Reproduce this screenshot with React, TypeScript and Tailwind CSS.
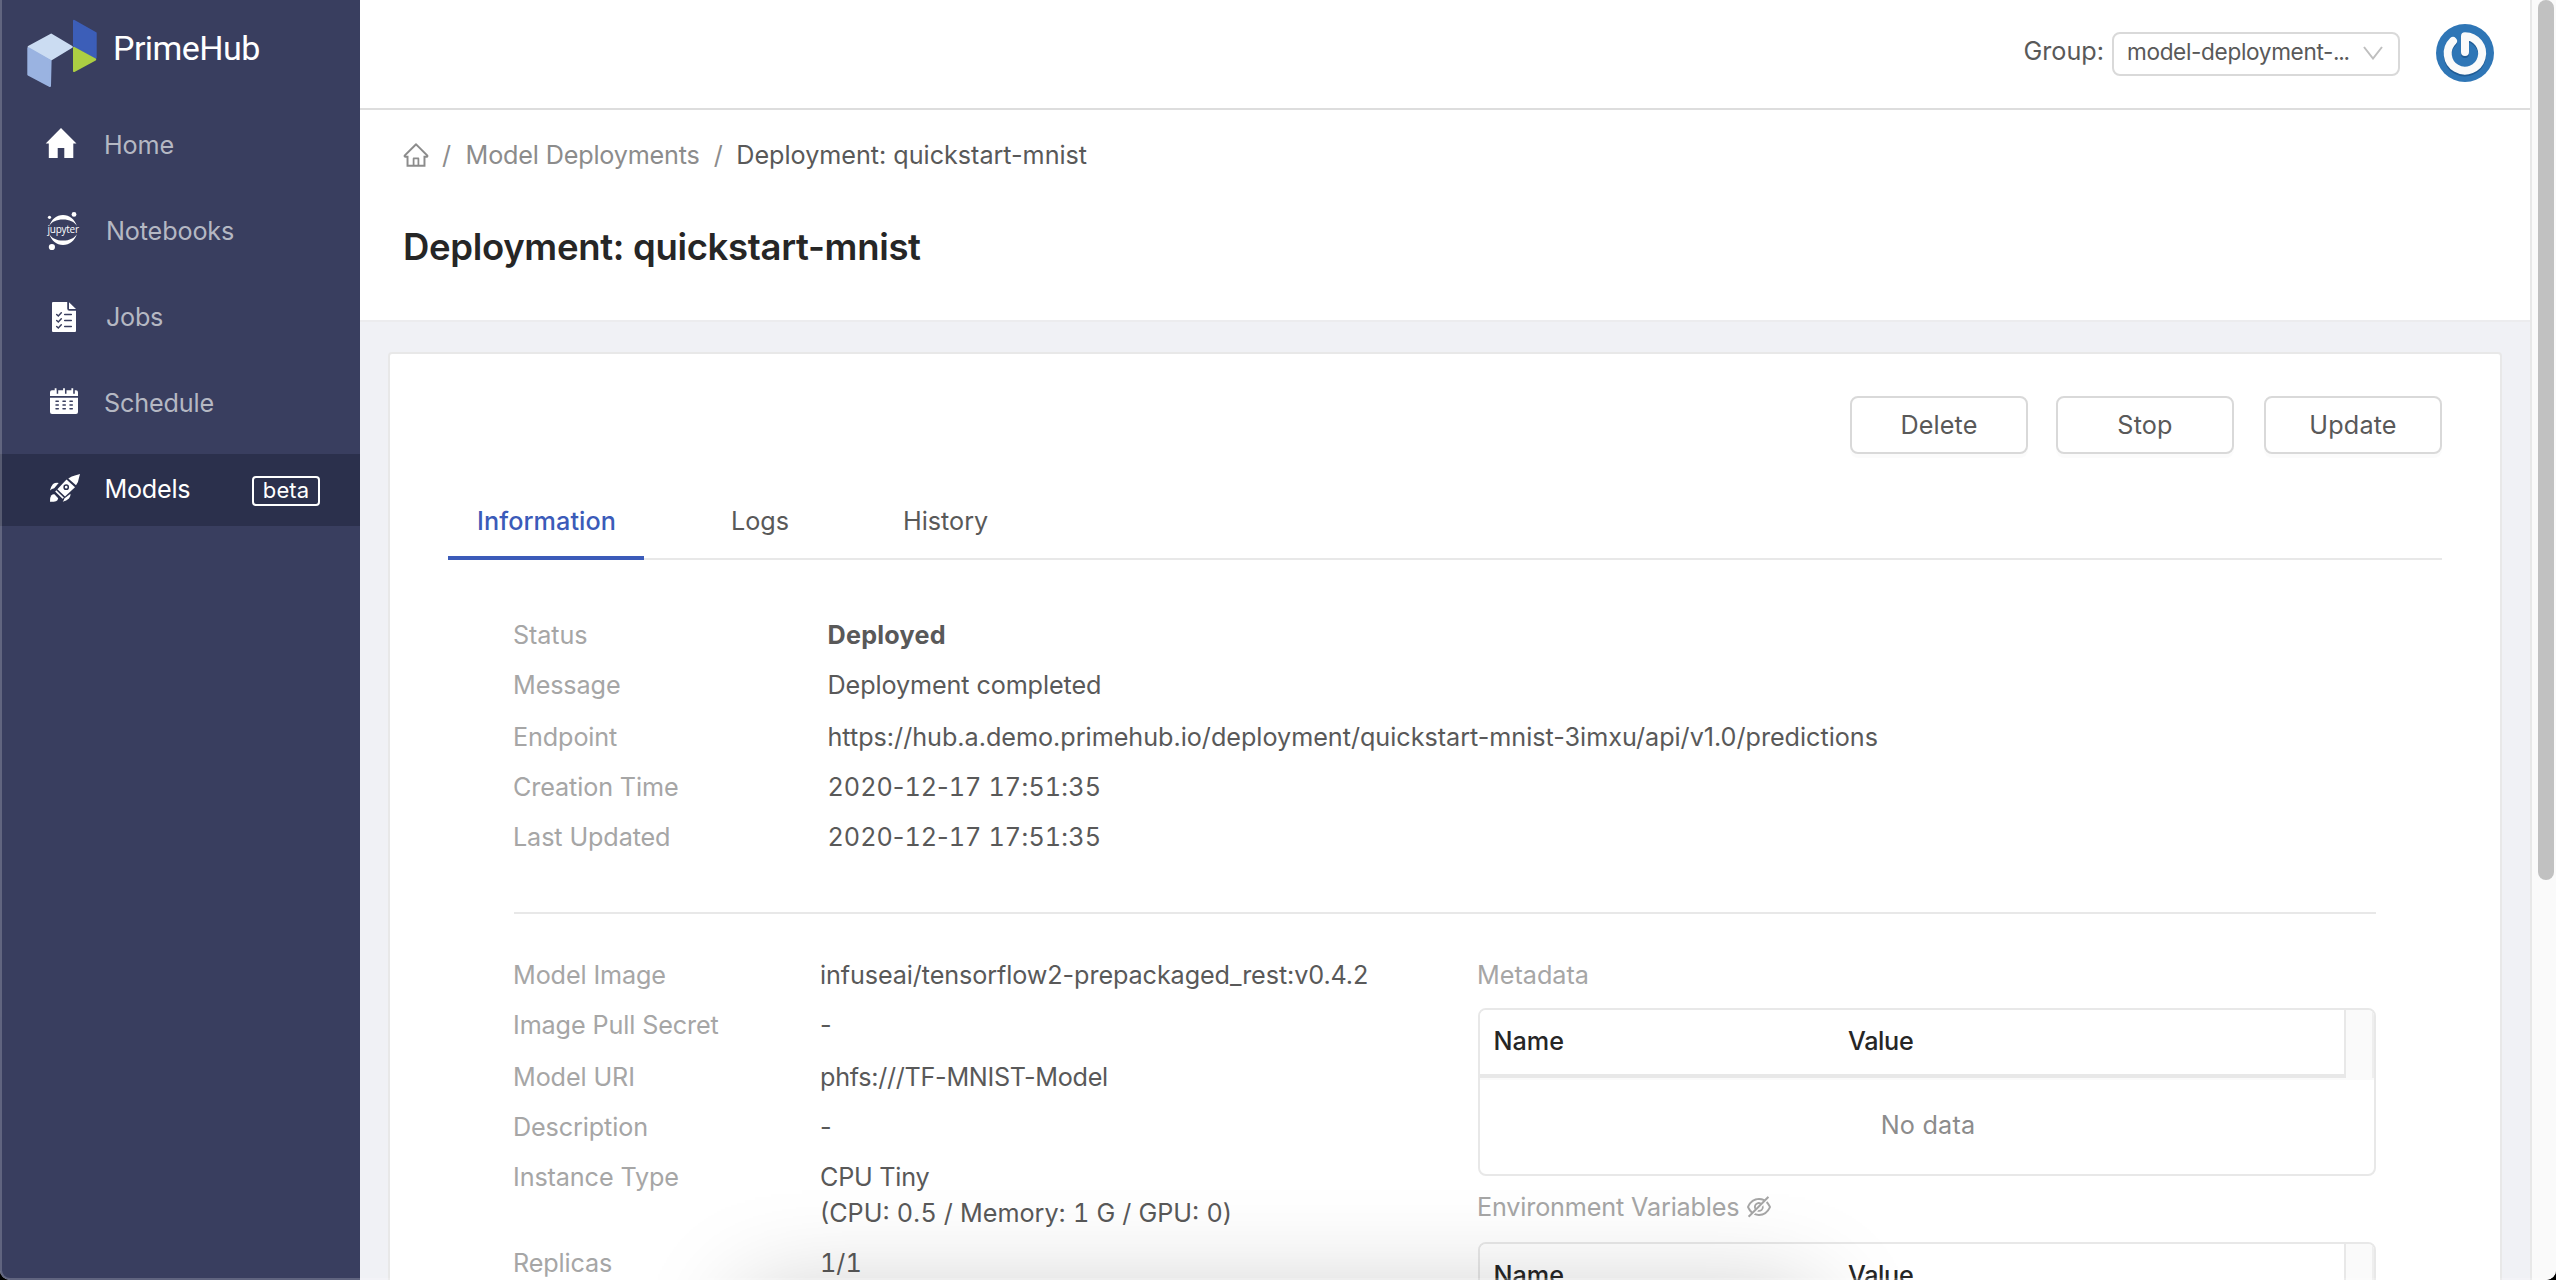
import type { ReactNode } from "react";
import { AiOutlineEyeInvisible, AiOutlineHome } from "react-icons/ai";

const NAVY = "#393e5f";

function Logo() {
  return (
    <svg width="72" height="70" viewBox="26 18 72 70" className="shrink-0" strokeLinejoin="round" strokeWidth="2">
      <path d="M51.2 34.6 71.8 46.9 51.2 59.5 28.6 47z" fill="#cbdcf2" stroke="#cbdcf2" />
      <path d="M28.3 48.2 50.6 60.8 50 86 28.3 74.6z" fill="#9ab3e1" stroke="#9ab3e1" />
      <path d="M74 20.8 95.7 33v24.8L74 45.8z" fill="#3c5eb8" stroke="#3c5eb8" />
      <path d="M74 47.8 95.2 59.5 74 71z" fill="#acce43" stroke="#acce43" />
    </svg>
  );
}

function IconFrame({ top, children }: { top: number; children: ReactNode }) {
  return (
    <svg width="103" height="72" viewBox={`0 ${top} 103 72`} className="shrink-0" fill="#fff">
      {children}
    </svg>
  );
}

function HomeGlyph() {
  return (
    <IconFrame top={110}>
      <path d="M61 128 76.5 143.5H73.3V158H64.3V148H57.7V158H48.8V143.5H45.7z" />
    </IconFrame>
  );
}

function JupyterGlyph() {
  return (
    <IconFrame top={196}>
      <circle cx="74" cy="214.4" r="2.4" />
      <circle cx="49.5" cy="217.3" r="1.6" />
      <circle cx="51.9" cy="247" r="3.1" />
      <path d="M49.3 226C51.5 219.3 56.5 215 63 215s11.7 4.300 13.900 11C74.500 222 69.500 219.600 63 219.600s-11.500 2.400-13.700 6.400z" />
      <path d="M49.300 234C51.500 240.700 56.500 245 63 245s11.700-4.300 13.900-11C74.500 238.200 69.500 240.600 63 240.600s-11.500-2.400-13.700-6.600z" />
      <text x="63.300" y="233" textAnchor="middle" textLength="31.500" fontSize="10" fontFamily="'Open Sans', sans-serif">
        jupyter
      </text>
    </IconFrame>
  );
}

function JobsGlyph() {
  return (
    <IconFrame top={282}>
      <path d="M53 302H67.200V308.500Q67.200 310.700 69.400 310.700H76V331Q76 332 75 332H53Q52 332 52 331V303Q52 302 53 302z" />
      <path d="M69 302.300 76 309H69z" />
      <g stroke={NAVY} strokeWidth="1.500" fill="none" strokeLinecap="round">
        <path d="M64.700 314.500H71.300M64.700 320.500H71.300M64.700 326.500H71.300" />
        <path d="M56.700 314.500 58.300 316 61.300 312.800M56.700 320.500 58.300 322 61.300 318.800M56.700 326.500 58.300 328 61.300 324.800" />
      </g>
    </IconFrame>
  );
}

function ScheduleGlyph() {
  return (
    <IconFrame top={368}>
      <path d="M52 390.300H76Q78 390.300 78 392.300V396H50V392.300Q50 390.300 52 390.300z" />
      <path d="M50 397.700H78V412Q78 414 76 414H52Q50 414 50 412z" />
      <g stroke={NAVY} strokeWidth="1.800">
        <path d="M57.300 389V393.800M65.600 389V393.800M73.900 389V393.800" />
      </g>
      <g stroke="#fff" strokeWidth="1.800">
        <path d="M55.600 388.300V394M64 388.300V394M72.300 388.300V394" />
      </g>
      <g stroke={NAVY} strokeWidth="1.500" strokeLinecap="round">
        <path d="M56 401.300H58.300M63 401.300H65.300M70 401.300H72.300M56 405H58.300M63 405H65.300M70 405H72.300M56 408.700H58.300M63 408.700H65.300M70 408.700H72.300" />
      </g>
    </IconFrame>
  );
}

function RocketGlyph() {
  return (
    <IconFrame top={454}>
      <g transform="translate(50 474)">
        <path d="M30 0 28.800 4.500Q28.500 8.300 26 11.200L18.300 4.600Q21.500 1.900 25.800 1.200z" />
        <path d="M16.500 5.600 25 13.300 15 22.600 7.400 15.200z" />
        <path d="M6.300 16.200 13.900 23.700 12.500 24.800 5.200 17.400z" />
        <circle cx="16.200" cy="13.200" r="2.100" fill="none" stroke="#2b304c" strokeWidth="1.500" />
        <path d="M0 16.500Q.8 12.500 3 10Q5.300 8.400 8.700 8.900L4.200 14.200Q1.800 14.800 0 16.500z" />
        <path d="M12.700 27.800Q14.200 26.200 14.300 24.600L20.500 19.800Q20.800 22.500 19 24.500Q16.500 26.800 12.700 27.800z" />
        <path d="M0 27.800Q-.2 23.500 1.200 21.600Q2.600 20 4.400 20.300L8.200 24.300Q7.800 26.600 6 27.200Q3.500 27.900 0 27.800z" />
      </g>
    </IconFrame>
  );
}

function Avatar() {
  return (
    <svg width="58" height="58" viewBox="0 0 58 58" className="mt-[24px] ml-[36px] shrink-0">
      <circle cx="29" cy="29" r="29" fill="#2f76b6" />
      <g fill="none" strokeLinecap="round" strokeLinejoin="round" strokeWidth="8">
        <path d="M29 29V13A17.200 17.200 0 1 1 16.800 18" stroke="#1f5c96" transform="translate(0 1)" />
        <path d="M29 28V12.200A17.200 17.200 0 1 1 17 17" stroke="#fafafa" />
      </g>
    </svg>
  );
}

const NAV = [
  { label: "Home", glyph: <HomeGlyph />, cls: "ml-[1px] tracking-[-0.1px]" },
  { label: "Notebooks", glyph: <JupyterGlyph />, cls: "ml-[3px] tracking-[-0.15px]" },
  { label: "Jobs", glyph: <JobsGlyph />, cls: "ml-[3px] tracking-[-0.3px]" },
  { label: "Schedule", glyph: <ScheduleGlyph />, cls: "ml-[1px] tracking-[-0.15px]" },
];

function Sidebar() {
  return (
    <aside className="flex w-[360px] shrink-0 flex-col bg-[#393e5f]">
      <div className="flex h-[110px] items-start pt-[18px] pl-[26px]">
        <Logo />
        <span className="ml-[15px] font-[Roboto,sans-serif] text-[34px] leading-[60px] tracking-[-0.55px] text-white">PrimeHub</span>
      </div>
      <nav className="flex flex-col gap-[14px]">
        {NAV.map((n) => (
          <a key={n.label} className="flex h-[72px] items-center text-[#b5b8c3]">
            {n.glyph}
            <span className={`pb-[2px] ${n.cls}`}>{n.label}</span>
          </a>
        ))}
        <a className="flex h-[72px] items-center bg-[#2b304c] text-white">
          <RocketGlyph />
          <span className="ml-[1.500px] pb-[2px] tracking-[-0.25px]">Models</span>
          <span className="mt-[2px] mr-[40px] ml-auto flex h-[30px] w-[68px] items-center justify-center rounded-[4px] border-2 border-white pb-[3px] text-[22px] leading-[26px] tracking-[0.1px]">
            beta
          </span>
        </a>
      </nav>
    </aside>
  );
}

function Header() {
  return (
    <header className="flex h-[110px] shrink-0 items-start justify-end border-b-2 border-[#dddddd] bg-white pr-[36px]">
      <span className="mt-[33px] mr-[8px] leading-[36px] text-[#595959]">Group:</span>
      <div className="mt-[32px] flex h-[44px] w-[288px] justify-between rounded-[8px] border-2 border-[#d9d9d9] pr-[15px] pl-[13px] text-[#595959]">
        <span className="text-[22.600px] leading-[35px] tracking-[-0.350px] whitespace-nowrap">
          model-deployment-<span className="tracking-[-1.300px]">...</span>
        </span>
        <svg width="20" height="14" viewBox="0 0 20 14" className="mt-[12px]" fill="none" stroke="#bfbfbf" strokeWidth="2">
          <path d="M1 1 10 12.500 19 1" />
        </svg>
      </div>
      <Avatar />
    </header>
  );
}

function PageHeader() {
  return (
    <section className="-ml-[360px] flex h-[212px] shrink-0 flex-col border-b-2 border-[#ececee] bg-white pl-[402px]">
      <div className="mt-[27px] flex h-[36px] items-center leading-[36px] text-[#8c8c8c]">
        <AiOutlineHome size={28} className="shrink-0" />
        <span className="ml-[12px]">/</span>
        <span className="ml-[14.500px] tracking-[-0.180px]">Model Deployments</span>
        <span className="ml-[14px]">/</span>
        <span className="ml-[13.500px] tracking-[-0.030px] text-[#595959]">Deployment: quickstart-mnist</span>
      </div>
      <h1 className="mt-[50px] ml-[1px] text-[36.500px] leading-[48px] font-semibold tracking-[-0.320px] text-[#262626]">Deployment: quickstart-mnist</h1>
    </section>
  );
}

function Button({ children, className }: { children: string; className: string }) {
  return (
    <button
      className={`flex h-[58px] w-[178px] items-center justify-center rounded-[8px] border-2 border-[#d9d9d9] bg-white leading-[36px] tracking-[0.150px] text-[#595959] shadow-[0_4px_0_rgba(0,0,0,0.016)] ${className}`}
    >
      {children}
    </button>
  );
}

function Row({ label, tall, wide, children }: { label: string; tall?: boolean; wide?: boolean; children: ReactNode }) {
  return (
    <div className={`flex items-start leading-[36px] ${tall ? "pt-[9px]" : "pt-[7px]"} pb-[7px]`}>
      <span className={`shrink-0 tracking-[-0.120px] text-[#a6a6a6] ${wide ? "w-[314.500px]" : "w-[307px]"}`}>{label}</span>
      <span className="whitespace-nowrap text-[#595959]">{children}</span>
    </div>
  );
}

/** Digits are set on a fixed pitch; the separators keep their own width. */
function Digits({ value }: { value: string }) {
  return (
    <>
      {value.split(/(\d+)/).map((part, i) =>
        i % 2 ? (
          <span key={i} className="tabular-nums">
            {part}
          </span>
        ) : (
          part
        ),
      )}
    </>
  );
}

function DataTable() {
  return (
    <div className="flex h-[168px] w-[898px] flex-col overflow-hidden rounded-[8px] border-2 border-[#e8e8e8] bg-white">
      <div className="flex h-[70px] shrink-0 bg-[#fafafa] pb-[2px]">
        <div className="flex w-[866px] items-center border-r-2 border-b-4 border-[#e8e8e8] bg-white pb-[2px] font-medium text-[#262626]">
          <span className="w-[355px] pl-[13.500px]">Name</span>
          <span className="pl-[13px] tracking-[-0.350px]">Value</span>
        </div>
        <div className="ml-auto w-[2px] bg-[#eeeeee]" />
      </div>
      <div className="flex grow items-center justify-center pb-[4px] pl-[2px] tracking-[0.200px] text-[#8c8c8c]">No data</div>
    </div>
  );
}

export default function App() {
  return (
    <div className="h-[1280px] w-[2556px] overflow-hidden bg-black">
      <div className="relative flex h-[1280px] w-[2556px] overflow-hidden rounded-b-[10px] bg-white font-[Inter,sans-serif] text-[25.200px] leading-[36px]">
        <div className="z-10 flex shrink-0">
          <Sidebar />
        </div>
        <main className="flex w-[2170px] shrink-0 flex-col bg-[#f0f1f5]">
          <Header />
          <PageHeader />
          <section className="mt-[30px] ml-[28px] flex h-[1100px] w-[2114px] shrink-0 flex-col rounded-[4px] border-2 border-[#e8e8e8] bg-white px-[58px] pt-[42px]">
            <div className="flex justify-end">
              <Button className="mr-[28px]">Delete</Button>
              <Button className="mr-[30px]">Stop</Button>
              <Button className="">Update</Button>
            </div>
            <div className="mt-[30px] flex h-[76px] shrink-0 border-b-2 border-[#e8e8e8] text-[#595959]">
              <span className="-mb-[2px] w-[196px] border-b-4 border-[#3b5bb9] pt-[19px] pl-[29px] font-medium tracking-[0.080px] text-[#3b5bb9]">Information</span>
              <span className="w-[172px] pt-[19px] pl-[87px]">Logs</span>
              <span className="pt-[19px] pl-[87px]">History</span>
            </div>
            <div className="mt-[50px] ml-[66px] flex w-[1862px] shrink-0 flex-col">
              <div className="-ml-[1px]">
                <Row label="Status" wide><b className="font-bold tracking-[0.220px]">Deployed</b></Row>
                <Row label="Message" wide><span className="tracking-[-0.110px]">Deployment completed</span></Row>
                <Row label="Endpoint" wide tall>
                  <span className="tracking-[-0.025px]">https://hub.a.demo.primehub.io/deployment/quickstart-mnist-3imxu/api/v1.0/predictions</span>
                </Row>
                <Row label="Creation Time" wide><Digits value="2020-12-17 17:51:35" /></Row>
                <Row label="Last Updated" wide><Digits value="2020-12-17 17:51:35" /></Row>
              </div>
              <div className="mt-[50px] h-[2px] w-[1862px] bg-[#e8e8e8]" />
              <div className="mt-[36px] flex">
                <div className="-ml-[1px] w-[965px] shrink-0">
                  <Row label="Model Image"><span className="tracking-[-0.100px]">infuseai/tensorflow2-prepackaged_rest:v0.4.2</span></Row>
                  <Row label="Image Pull Secret">-</Row>
                  <Row label="Model URI" tall><span className="tracking-[-0.290px]">phfs:///TF-MNIST-Model</span></Row>
                  <Row label="Description">-</Row>
                  <Row label="Instance Type">
                    <span className="tracking-[-0.250px]">CPU Tiny</span>
                    <br />
                    <Digits value="(CPU: 0.5 / Memory: 1 G / GPU: 0)" />
                  </Row>
                  <Row label="Replicas"><Digits value="1/1" /></Row>
                </div>
                <div className="flex flex-col">
                  <div className="-ml-[1px] h-[58px] pt-[7px] text-[#a6a6a6]">Metadata</div>
                  <DataTable />
                  <div className="-ml-[1px] flex h-[66px] items-start pt-[13px] text-[#a6a6a6]">
                    <span className="tracking-[-0.160px]">Environment Variables</span>
                    <AiOutlineEyeInvisible size={28} className="mt-[4px] ml-[6px]" />
                  </div>
                  <DataTable />
                </div>
              </div>
            </div>
          </section>
        </main>
        <div className="flex w-[26px] shrink-0 justify-center border-l-2 border-[#e8e8e8] bg-[#fafafa]">
          <div className="ml-[4px] h-[880px] w-[16px] rounded-full bg-[#c1c1c1]" />
        </div>
        <div className="pointer-events-none absolute top-[1294px] left-[745px] h-[400px] w-[1070px] shadow-[0_0_96px_rgba(0,0,0,0.22)]" />
        <div className="pointer-events-none absolute inset-0 z-20 rounded-b-[10px] border-b-2 border-l-2 border-white/20" />
      </div>
    </div>
  );
}
